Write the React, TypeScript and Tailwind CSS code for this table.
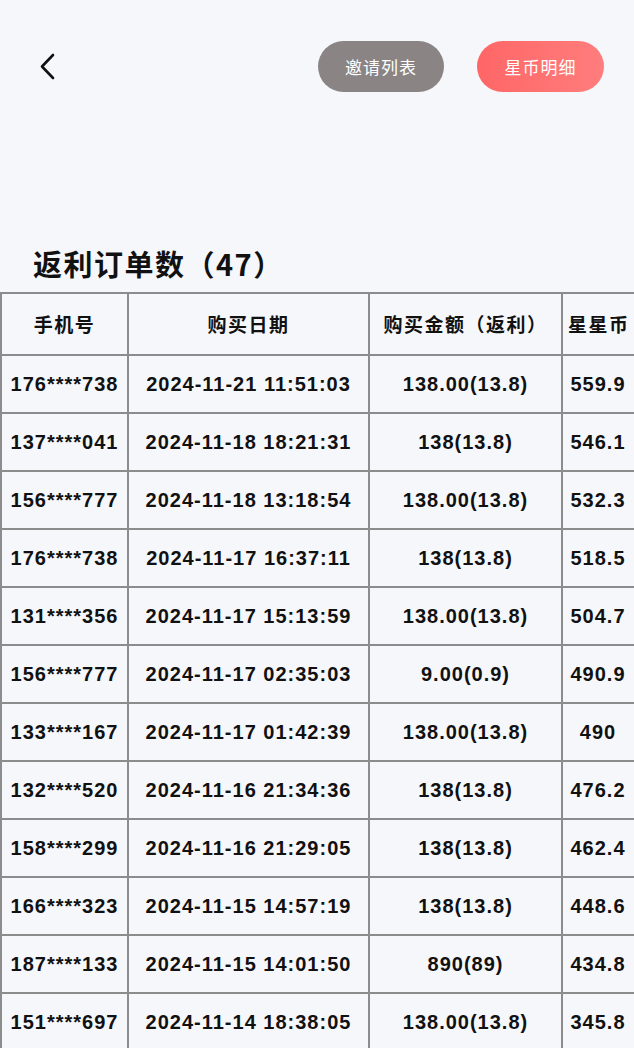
import React from 'react';

const rows = [
  { phone: '176****738', date: '2024-11-21 11:51:03', amount: '138.00(13.8)', coin: '559.9' },
  { phone: '137****041', date: '2024-11-18 18:21:31', amount: '138(13.8)', coin: '546.1' },
  { phone: '156****777', date: '2024-11-18 13:18:54', amount: '138.00(13.8)', coin: '532.3' },
  { phone: '176****738', date: '2024-11-17 16:37:11', amount: '138(13.8)', coin: '518.5' },
  { phone: '131****356', date: '2024-11-17 15:13:59', amount: '138.00(13.8)', coin: '504.7' },
  { phone: '156****777', date: '2024-11-17 02:35:03', amount: '9.00(0.9)', coin: '490.9' },
  { phone: '133****167', date: '2024-11-17 01:42:39', amount: '138.00(13.8)', coin: '490' },
  { phone: '132****520', date: '2024-11-16 21:34:36', amount: '138(13.8)', coin: '476.2' },
  { phone: '158****299', date: '2024-11-16 21:29:05', amount: '138(13.8)', coin: '462.4' },
  { phone: '166****323', date: '2024-11-15 14:57:19', amount: '138(13.8)', coin: '448.6' },
  { phone: '187****133', date: '2024-11-15 14:01:50', amount: '890(89)', coin: '434.8' },
  { phone: '151****697', date: '2024-11-14 18:38:05', amount: '138.00(13.8)', coin: '345.8' },
];

const cjk = "font-['Noto_Sans_CJK_SC',_'Noto_Sans',_sans-serif]";
const num = "font-['Liberation_Sans',_Arial,_sans-serif]";
const grid = 'grid grid-cols-[127px_241px_193px_90px]';
const cell = 'flex items-center justify-center border-r-2 border-b-2 border-[#8c8c8c] whitespace-nowrap';

export default function App() {
  return (
    <div className={`w-[634px] h-[1048px] overflow-hidden bg-[#f6f7fb] text-[#111] ${cjk}`}>
      {/* Top bar */}
      <div className="flex items-center pt-[41px] pl-[40px] pr-[30px]">
        <svg width="18" height="28" viewBox="0 0 18 28" fill="none" className="mt-[1px]">
          <path d="M13 2 L2 13.5 L13 25" stroke="#111" strokeWidth="2.6" strokeLinecap="round" strokeLinejoin="round" />
        </svg>
        <div className="ml-auto flex gap-[33px]">
          <button className="h-[51px] w-[126px] rounded-full bg-[#8a8485] text-white text-[17px] tracking-[1px]">
            邀请列表
          </button>
          <button className="h-[51px] w-[127px] rounded-full bg-gradient-to-r from-[#ff6666] to-[#ff7d7d] text-white text-[17px] tracking-[1px]">
            星币明细
          </button>
        </div>
      </div>

      {/* Title */}
      <h1 className="mt-[153px] pl-[33px] text-[29px] leading-[36px] font-semibold tracking-[1.5px]">
        返利订单数（47）
      </h1>

      {/* Table */}
      <div className="mt-[11px] w-[652px] border-t-2 border-l-2 border-[#8c8c8c]">
        <div className={`${grid} h-[62px] font-bold text-[19px] tracking-[1.5px]`}>
          <div className={cell}>手机号</div>
          <div className={cell}>购买日期</div>
          <div className={cell}>购买金额（返利）</div>
          <div className={`${cell} justify-start pl-[5px]`}>星星币</div>
        </div>
        {rows.map((r, i) => (
          <div key={i} className={`${grid} h-[58px] ${num} font-bold text-[20px] tracking-[1px]`}>
            <div className={cell}>{r.phone}</div>
            <div className={cell}>{r.date}</div>
            <div className={cell}>{r.amount}</div>
            <div className={`${cell} justify-start pl-[5px]`}>
              <span className="w-[60px] text-center">{r.coin}</span>
            </div>
          </div>
        ))}
      </div>
    </div>
  );
}
